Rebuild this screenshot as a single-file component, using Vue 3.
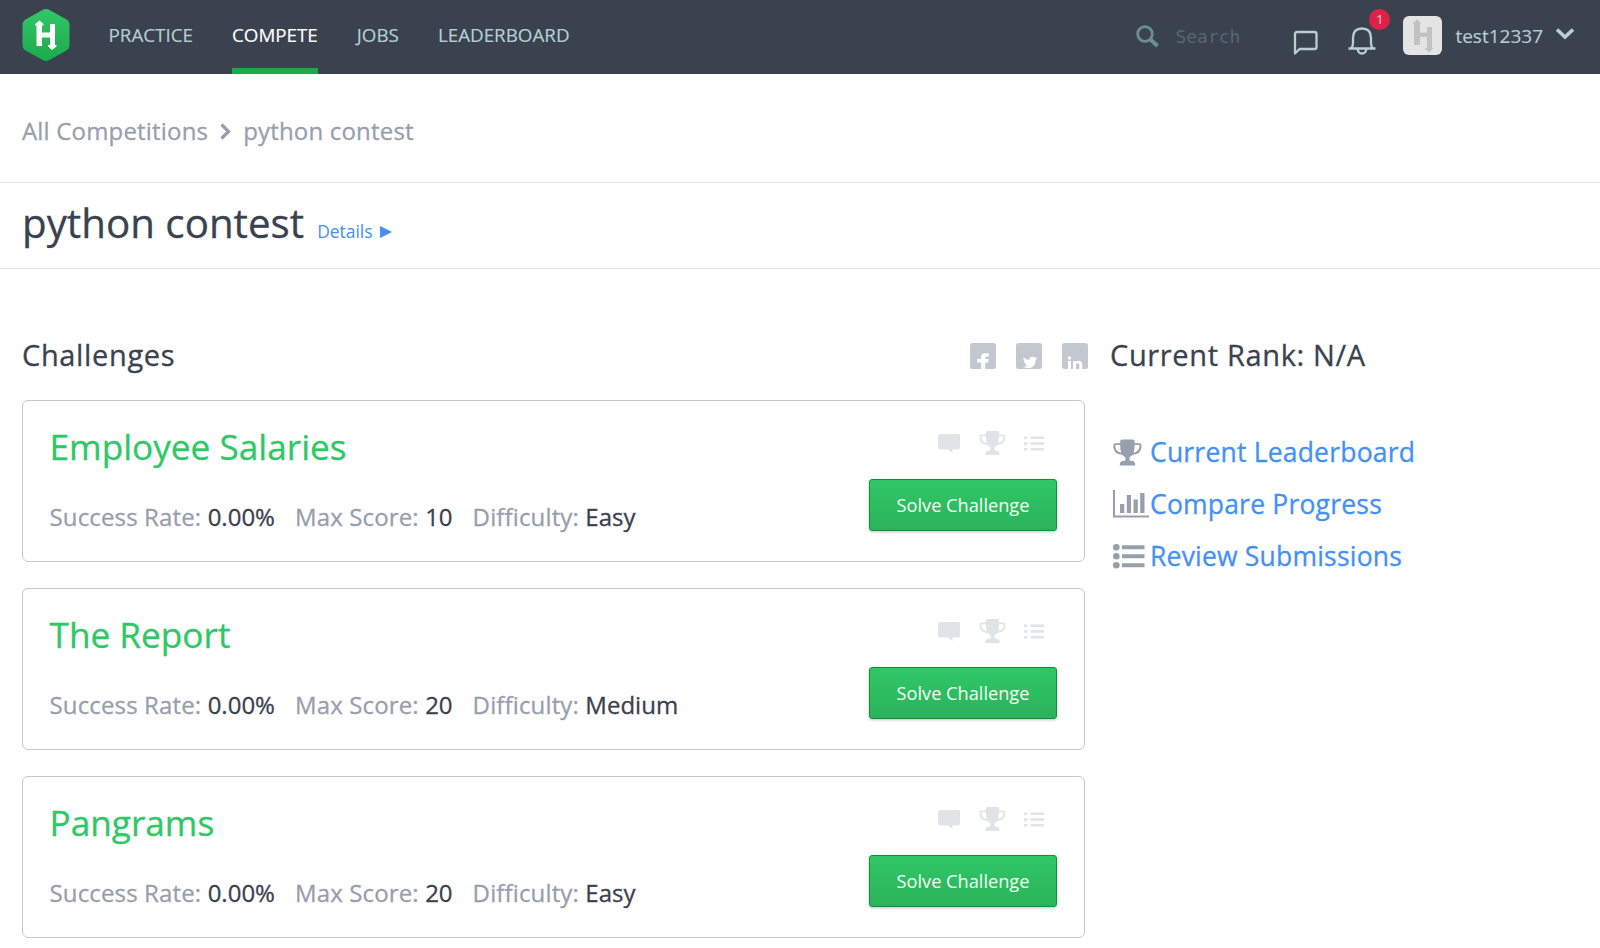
<script setup>
const navItems = [
  { label: 'PRACTICE' },
  { label: 'COMPETE', active: true },
  { label: 'JOBS' },
  { label: 'LEADERBOARD' },
]

const challenges = [
  { name: 'Employee Salaries', rate: '0.00%', score: 10, difficulty: 'Easy' },
  { name: 'The Report', rate: '0.00%', score: 20, difficulty: 'Medium' },
  { name: 'Pangrams', rate: '0.00%', score: 20, difficulty: 'Easy' },
]
</script>

<template>
  <svg class="defs" width="0" height="0" aria-hidden="true">
    <defs>
      <linearGradient id="logo-fill" x1="0" y1="0" x2="0" y2="1">
        <stop offset="0" stop-color="#32c766" />
        <stop offset="1" stop-color="#1ba94c" />
      </linearGradient>
      <symbol id="trophy" viewBox="0 0 30 27">
        <path d="M7.4 2.2Q7.4 0 9.4 0H20.4Q22.4 0 22.4 2.2V4H27.6Q29.4 4 29.4 6V8Q29 15 20.6 15.8Q18.4 17.4 17.2 18.6Q16.4 20.8 18 22.2H20.6Q23 22.6 23 27H7Q7 22.6 9.4 22.2H12Q13.6 20.8 12.8 18.6Q11.4 17.4 9.2 15.8Q.8 15 .4 8V6Q.4 4 2.200 4H7.4ZM7.4 5.800H2.4V7.4Q2.8 12.4 8.4 13.8Q7.4 11 7.4 5.800ZM22.4 5.800Q22.4 11 21.4 13.8Q27 12.4 27.4 7.4V5.800Z" fill="currentColor" />
      </symbol>
    </defs>
  </svg>

  <header class="topbar">
    <svg class="logo" viewBox="0 0 48 52">
      <path d="M20.5 1Q24 -1 27.500 1L44.500 10.500Q47.500 12.300 47.500 16V36Q47.500 39.700 44.500 41.500L27.500 51Q24 53 20.500 51L3.500 41.500Q.5 39.700 .5 36V16Q.5 12.300 3.500 10.500Z" fill="url(#logo-fill)" />
      <path d="M14.500 37V16.500H13.200V15L17.500 11.500L21.500 15V16.500H20V23.500H28V15H33V36H34.500V37.500L30 41L26 37.500V36H28V28.500H20V37Z" fill="#fff" />
    </svg>
    <nav class="nav">
      <a v-for="item in navItems" :key="item.label" :class="['nav-item', { active: item.active }]">{{ item.label }}</a>
    </nav>
    <div class="tools">
      <svg class="search-icon" viewBox="0 0 24 24" fill="none" stroke="#6b8e93">
        <circle cx="9" cy="9" r="7.300" stroke-width="2.800" />
        <path d="M14.500 14.500L21.500 21" stroke-width="4" />
      </svg>
      <span class="search">Search</span>
      <svg class="chat" viewBox="0 0 26 26" fill="none" stroke="#b7cfd3" stroke-width="2.300" stroke-linejoin="round">
        <path d="M2 23.500V4Q2 2 4 2H21.500Q23.500 2 23.500 4V17Q23.500 19 21.500 19H6.500Z" />
      </svg>
      <div class="bell-wrap">
        <svg class="bell" viewBox="0 0 30 30" fill="none" stroke="#b7cfd3" stroke-width="2.300">
          <path d="M1.500 22.500H28.500M4 22.500Q6 20.500 6 17V12Q6 2.500 15 2.500Q24 2.500 24 12V17Q24 20.500 26 22.500M10.500 22.500Q11 27.500 15 27.500Q19 27.500 19.500 22.500" />
        </svg>
        <span class="badge">1</span>
      </div>
      <svg class="avatar" viewBox="0 0 39 39">
        <rect width="39" height="39" rx="6" fill="#e4e4e4" />
        <path d="M11 29V8H9.500L14 3L18.500 8H17V16.500H24V11H29V32H30.500L26 36.500L21.500 32H24V21H17V29Z" fill="#c2c2c2" />
      </svg>
      <span class="user">test12337</span>
      <svg class="caret" viewBox="0 0 18 12" fill="none" stroke="#b7cfd3" stroke-width="3.500">
        <path d="M1 1.500L9 9L17 1.500" />
      </svg>
    </div>
  </header>

  <div class="crumbs">
    <span>All Competitions</span>
    <svg class="crumb-arrow" viewBox="0 0 11 17" fill="none" stroke="#979faf" stroke-width="3.300">
      <path d="M1.500 1.500L8.500 8.500L1.500 15.500" />
    </svg>
    <span>python contest</span>
  </div>

  <div class="title-bar">
    <h1>python contest</h1>
    <a class="details">Details <svg class="play" viewBox="0 0 12 12"><path d="M0 0L12 6L0 12Z" fill="#4390f6" /></svg></a>
  </div>

  <main class="page">
    <section class="main-col">
      <div class="section-head">
        <h2>Challenges</h2>
        <div class="social">
          <svg viewBox="0 0 26 26"><rect width="26" height="26" rx="2.500" fill="#c2c7d0" /><path d="M11 26V19.500H7.200V16H11V14.200Q11 10.200 15 10.200H18.700V13.400H16.700Q15.200 13.400 15.200 14.700V16H18.700L18.200 19.500H15.200V26Z" fill="#fff" /></svg>
          <svg viewBox="0 0 26 26"><rect width="26" height="26" rx="2.500" fill="#c2c7d0" /><path d="M7.500 14.200Q10 17 13.500 17Q13 14 16 13.700Q17.500 13.700 18.500 14.800L20.800 14L19.800 15.800L21 15.500L19.600 17.200Q19.500 22 16 24.300Q11.500 26.500 7 23.800Q9.800 24 11.500 22.500Q9.300 22.200 8.800 20.600H10Q7.600 19.700 7.500 17.500L8.800 17.900Q6.800 16.300 7.500 14.200Z" fill="#fff" /></svg>
          <svg viewBox="0 0 26 26"><rect width="26" height="26" rx="2.500" fill="#c2c7d0" /><circle cx="7.500" cy="15" r="1.700" fill="#fff" /><path d="M6 18H9V26H6ZM11 18H13.800V19Q15 17.500 17 17.700Q20.300 18 20.300 22V26H17.300V22.300Q17.300 20.300 15.700 20.300Q14 20.300 14 22.300V26H11Z" fill="#fff" /></svg>
        </div>
      </div>

      <article v-for="c in challenges" :key="c.name" class="card">
        <div class="info">
          <h3>{{ c.name }}</h3>
          <div class="stats">
            <span>Success Rate: <b>{{ c.rate }}</b></span>
            <span>Max Score: <b>{{ c.score }}</b></span>
            <span>Difficulty: <b>{{ c.difficulty }}</b></span>
          </div>
        </div>
        <div class="actions">
          <div class="card-icons">
            <svg class="i-comment" viewBox="0 0 22 19"><path d="M2 0H20Q22 0 22 2V13.500Q22 15.500 20 15.500H14.500V19L10 15.500H2Q0 15.500 0 13.500V2Q0 0 2 0Z" fill="currentColor" /></svg>
            <svg class="i-trophy"><use href="#trophy" /></svg>
            <svg class="i-list" viewBox="0 0 20 15" fill="currentColor"><path d="M0 .5H3.500V3H0ZM6.500 .5H20V3H6.500ZM0 6.300H3.500V8.800H0ZM6.500 6.300H20V8.800H6.500ZM0 12H3.500V14.500H0ZM6.500 12H20V14.500H6.500Z" /></svg>
          </div>
          <button class="solve">Solve Challenge</button>
        </div>
      </article>
    </section>

    <aside class="side">
      <h2>Current Rank: N/A</h2>
      <ul class="links">
        <li><span class="slot"><svg class="s-trophy"><use href="#trophy" /></svg></span><a>Current Leaderboard</a></li>
        <li>
          <span class="slot"><svg class="s-chart" viewBox="0 0 36 28" fill="currentColor"><path d="M0 0H2V25.500H36V27.500H0ZM7 14H11.300V23H7ZM13.800 5H18V23H13.800ZM20.500 9.500H24.800V23H20.500ZM27.200 3H31.500V23H27.200Z" /></svg></span>
          <a>Compare Progress</a>
        </li>
        <li>
          <span class="slot"><svg class="s-list" viewBox="0 0 32 25" fill="currentColor"><circle cx="3.300" cy="3.300" r="3.300" /><circle cx="3.300" cy="12.300" r="3.300" /><circle cx="3.300" cy="21.300" r="3.300" /><path d="M9 1.300H31.500V5.300H9ZM9 10.300H31.500V14.300H9ZM9 19.300H31.500V23.300H9Z" /></svg></span>
          <a>Review Submissions</a>
        </li>
      </ul>
    </aside>
  </main>
</template>

<style>
body {
  margin: 0;
  background: #fff;
  overflow: hidden;
}
#app {
  font-family: "Open Sans", "Noto Sans", sans-serif;
  color: #39424e;
  -webkit-text-stroke: 0.3px currentColor;
}
</style>

<style scoped>
svg { display: block; flex: none; }
.defs { position: absolute; }
h1, h2, h3, ul { margin: 0; padding: 0; font-weight: 400; list-style: none; }

.topbar {
  display: flex;
  height: 74px;
  box-sizing: border-box;
  padding: 0 26px 0 22px;
  background: #39424e;
  color: #b7cfd3;
  -webkit-text-stroke-width: 0.15px;
}
.logo { width: 48px; height: 52px; margin-top: 9px; }
.nav { display: flex; gap: 39px; margin-left: 38.500px; }
.nav-item {
  box-sizing: border-box;
  height: 74px;
  font-size: 18.800px;
  line-height: 70px;
}
.nav-item.active { color: #fff; border-bottom: 6px solid #1ba94c; }
.tools { display: flex; margin-left: auto; }
.search-icon { width: 24px; height: 24px; margin: 25px 15px 0 0; }
.search {
  width: 118px;
  font-family: "DejaVu Sans Mono", monospace;
  font-size: 18px;
  line-height: 74px;
  color: #566770;
  -webkit-text-stroke-width: 0;
}
.chat { width: 26px; height: 26px; margin: 30px 27.500px 0 0; }
.bell-wrap { position: relative; margin-right: 26.500px; }
.bell { width: 30px; height: 30px; margin-top: 26px; }
.badge {
  position: absolute;
  top: 9px;
  left: 22.500px;
  width: 21px;
  height: 21px;
  border-radius: 50%;
  background: #df2147;
  color: #dfb5c0;
  font-size: 13.500px;
  line-height: 21px;
  text-align: center;
}
.avatar { width: 39px; height: 39px; margin: 16px 13px 0 0; }
.user { font-size: 19px; line-height: 72px; margin-right: 13px; }
.caret { width: 18px; height: 12px; margin-top: 28px; }

.crumbs {
  display: flex;
  height: 108px;
  padding-left: 22px;
  border-bottom: 1px solid #dfe1e5;
  color: #979faf;
  font-size: 24px;
  line-height: 114px;
  letter-spacing: 0.180px;
}
.crumb-arrow { width: 11px; height: 17px; margin: 49px 12px 0; }

.title-bar {
  display: flex;
  align-items: baseline;
  height: 85px;
  padding-left: 22px;
  border-bottom: 1px solid #dfe1e5;
}
h1 { font-size: 40.300px; line-height: 79px; }
.details {
  display: flex;
  align-items: baseline;
  gap: 7px;
  margin-left: 13px;
  font-size: 17.400px;
  color: #4390f6;
  -webkit-text-stroke-width: 0;
}
.play { width: 12px; height: 12px; }

.page { display: grid; grid-template-columns: 1063px 1fr; column-gap: 25px; padding: 66px 22px 0; }
h2 { font-size: 29px; line-height: 40px; letter-spacing: 0.650px; }
.section-head { display: flex; justify-content: space-between; height: 65px; }
.social { display: flex; gap: 20px; margin: 8px -3px 0 0; }
.social svg { width: 26px; height: 26px; }

.card {
  display: flex;
  justify-content: space-between;
  box-sizing: border-box;
  height: 162px;
  margin-bottom: 26px;
  padding: 0 27px 0 26.500px;
  border: 1px solid #c2c7d0;
  border-radius: 6px;
}
h3 { margin-top: 21px; font-size: 35.200px; line-height: 48px; color: #2ec866; }
.stats {
  display: flex;
  gap: 20px;
  margin-top: 30px;
  font-size: 24px;
  line-height: 33px;
  letter-spacing: 0.140px;
  color: #979faf;
  white-space: nowrap;
}
.stats b { font-weight: 400; color: #39424e; letter-spacing: 0; }
.actions { width: 188px; }
.card-icons { display: flex; height: 48px; margin-top: 30px; padding-left: 69px; color: #e0e3e8; }
.i-comment { width: 22px; height: 19px; margin: 3px 19px 0 0; }
.i-trophy { width: 27px; height: 24px; margin-right: 18px; }
.i-list { width: 20px; height: 15px; margin-top: 5px; }
.solve {
  box-sizing: border-box;
  width: 188px;
  height: 52px;
  padding: 0;
  border: 1px solid #168a3f;
  border-radius: 3px;
  background: linear-gradient(#30c767, #2bb35b);
  box-shadow: 0 1px 3px rgba(0, 0, 0, 0.25);
  color: #f4fff8;
  font: 18.200px/50px "Open Sans", sans-serif;
  -webkit-text-stroke-width: 0;
}

.links { margin-top: 51px; }
.links li {
  display: flex;
  align-items: center;
  height: 52px;
  font-size: 26.500px;
  letter-spacing: 0.200px;
  color: #4390f6;
  white-space: nowrap;
}
.slot { width: 37px; margin-left: 3px; color: #979faf; }
.s-trophy { width: 29px; height: 27px; }
.s-chart { width: 36px; height: 28px; }
.s-list { width: 32px; height: 25px; }
</style>
